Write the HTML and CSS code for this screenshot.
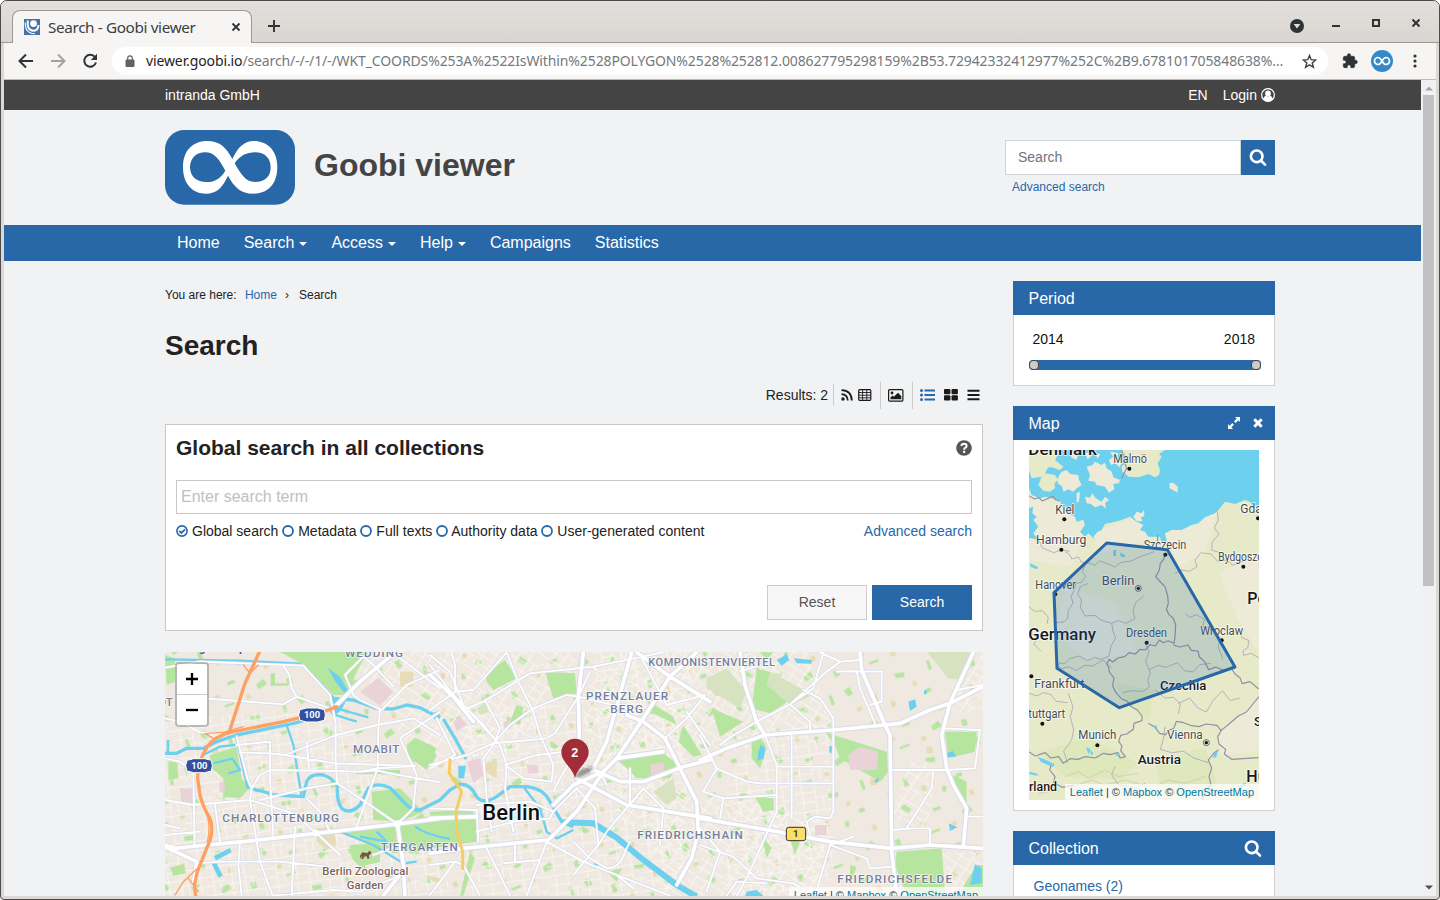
FILE: index.html
```html
<!DOCTYPE html>
<html lang="en">
<head>
<meta charset="utf-8">
<title>Search - Goobi viewer</title>
<link rel="stylesheet" href="styles.css">
</head>
<body>
<svg class="defs" width="0" height="0">
  <defs>
    <symbol id="i-search" viewBox="0 0 1792 1792"><path fill="currentColor" d="M1216 832q0-185-131.5-316.5t-316.5-131.5-316.5 131.5-131.5 316.5 131.5 316.5 316.5 131.5 316.5-131.5 131.5-316.5zm512 832q0 52-38 90t-90 38q-54 0-90-38l-343-342q-179 124-399 124-143 0-273.5-55.5t-225-150-150-225-55.5-273.5 55.5-273.5 150-225 225-150 273.5-55.5 273.5 55.5 225 150 150 225 55.5 273.5q0 220-124 399l343 343q37 37 37 90z"/></symbol>
    <symbol id="i-ring" viewBox="0 0 12 12"><circle cx="6" cy="6" r="5" fill="none" stroke="currentColor" stroke-width="1.8"/></symbol>
  </defs>
</svg>
<div class="window">
  <div class="tabstrip">
    <div class="tab">
      <svg class="favicon" width="16" height="16" viewBox="0 0 16 16"><rect width="16" height="16" fill="#4674a8"/><path d="M1.200 3.500Q1 14.800 11 14.800" fill="none" stroke="#fff" stroke-width="1.100"/><path d="M3.800 1.500Q2.500 11.500 9.500 11.800Q14.200 11.500 14.500 6" stroke="#fff" fill="none" stroke-width="2"/><circle cx="9.500" cy="4.600" r="3.400" fill="#fff"/></svg>
      <span class="tab-title">Search - Goobi viewer</span>
      <svg width="10" height="10" viewBox="0 0 10 10"><path d="M1.500 1.500l7 7m0-7l-7 7" stroke="#2e3436" stroke-width="1.800"/></svg>
    </div>
    <svg class="newtab" width="12" height="12" viewBox="0 0 12 12"><path d="M6 0v12M0 6h12" stroke="#2e3436" stroke-width="1.900"/></svg>
    <div class="wm">
      <svg width="14" height="14" viewBox="0 0 14 14"><circle cx="7" cy="7" r="7" fill="#2e3436"/><path d="M3.700 5h6.600L7 9.500z" fill="#e5e1dd"/></svg>
      <svg width="8" height="8" viewBox="0 0 8 8"><path d="M0 7h8" stroke="#2e3436" stroke-width="2"/></svg>
      <svg width="8" height="8" viewBox="0 0 8 8"><rect x="1" y="1" width="6" height="6" fill="none" stroke="#2e3436" stroke-width="2"/></svg>
      <svg width="8" height="8" viewBox="0 0 8 8"><path d="M.5.5l7 7m0-7l-7 7" stroke="#2e3436" stroke-width="2"/></svg>
    </div>
  </div>
  <div class="toolbar">
    <svg class="tb-i" width="16" height="16" viewBox="0 0 16 16"><path d="M15 8H2M8 1.500L1.500 8 8 14.500" fill="none" stroke="#2e3436" stroke-width="2"/></svg>
    <svg class="tb-i" width="16" height="16" viewBox="0 0 16 16"><path d="M1 8h13M8 1.500L14.500 8 8 14.500" fill="none" stroke="#a3a3a3" stroke-width="2"/></svg>
    <svg class="tb-i" width="16" height="16" viewBox="0 0 16 16"><path d="M13 4A6 6 0 1 0 14 9.500" fill="none" stroke="#2e3436" stroke-width="2"/><path d="M15 .8V7H8.800z" fill="#2e3436"/></svg>
    <div class="omnibox">
      <svg width="10" height="13" viewBox="0 0 10 13"><rect x="0.500" y="4.500" width="9" height="7.500" rx="1" fill="#5f6368"/><path d="M2.700 5V3.200a2.300 2.300 0 0 1 4.600 0V5" fill="none" stroke="#5f6368" stroke-width="1.200"/></svg>
      <div class="url"><b>viewer.goobi.io</b>/search/-/-/1/-/WKT_COORDS%253A%2522IsWithin%2528POLYGON%2528%252812.008627795298159%2B53.72942332412977%252C%2B9.678101705848638%…</div>
      <svg width="15" height="15" viewBox="0 0 15 15"><path d="M7.500 1.500l1.700 4.200 4.500.3-3.500 2.900 1.200 4.400-3.900-2.500-3.900 2.500 1.200-4.400L1.300 6l4.500-.3z" fill="none" stroke="#3c4043" stroke-width="1.400"/></svg>
    </div>
    <svg class="puzzle" width="16" height="16" viewBox="0 0 24 24"><path fill="#2e3436" d="M20.500 11H19V7c0-1.100-.9-2-2-2h-4V3.500a2.500 2.500 0 0 0-5 0V5H4c-1.100 0-2 .9-2 2v3.800h1.500a2.700 2.700 0 0 1 0 5.400H2V20c0 1.100.9 2 2 2h3.800v-1.500a2.700 2.700 0 0 1 5.400 0V22H17c1.100 0 2-.9 2-2v-4h1.500a2.500 2.500 0 0 0 0-5z" stroke="#2e3436"/></svg>
    <svg class="avatar" width="22" height="22" viewBox="0 0 22 22"><circle cx="11" cy="11" r="11" fill="#3589c9"/><path d="M11 11C9.500 8.300 8.600 7.500 7 7.500a3.500 3.500 0 0 0 0 7C8.600 14.500 9.500 13.700 11 11S13.400 7.500 15 7.500a3.500 3.500 0 0 1 0 7C13.400 14.500 12.500 13.700 11 11z" fill="none" stroke="#fff" stroke-width="1.700"/></svg>
    <svg class="dots" width="4" height="14" viewBox="0 0 4 14"><g fill="#2e3436"><circle cx="2" cy="2" r="1.600"/><circle cx="2" cy="7" r="1.600"/><circle cx="2" cy="12" r="1.600"/></g></svg>
  </div>
  <div class="viewport">
    <div class="page">
      <div class="topbar"><div class="wrap">
        <span class="brand">intranda GmbH</span><span>EN</span><span class="login">Login</span>
        <svg width="14" height="14" viewBox="0 0 14 14"><circle cx="7" cy="7" r="6.400" fill="none" stroke="#fff" stroke-width="1.200"/><circle cx="7" cy="5.500" r="2.900" fill="#fff"/><path d="M2.300 11.200C2.700 9 3.800 8 4.800 7.800q2.200 1.400 4.400 0c1 .2 2.100 1.200 2.500 3.400Q7 15.500 2.300 11.200z" fill="#fff"/></svg>
      </div></div>
      <div class="header wrap">
        <svg width="130" height="75" viewBox="45 60 390 225"><rect x="45" y="60" width="390" height="224" rx="58" fill="#2867a8"/><path fill="#fff" fill-rule="evenodd" d="M247 147C229 112 208 93 172 93C125 93 99 125 99 172C99 225 130 251 167 251C200 251 218 232 234 197C252 232 275 251 308 251C358 251 382 218 382 170C382 120 350 93 312 93C280 93 262 115 247 147ZM120 170C122 142 140 127 165 127C195 127 208 150 226 182C212 205 195 216 170 216C140 216 120 200 120 170ZM254 160C270 137 290 127 315 127C345 127 362 145 362 172C362 200 345 216 315 216C285 216 272 190 254 160Z"/></svg>
        <div class="site">Goobi viewer</div>
        <div class="quick">
          <div class="quick-row"><div class="quick-in">Search</div><div class="quick-btn"><svg width="18" height="18"><use href="#i-search"/></svg></div></div>
          <a class="adv">Advanced search</a>
        </div>
      </div>
      <div class="nav"><div class="wrap">
        <a>Home</a><a class="dd">Search</a><a class="dd">Access</a><a class="dd">Help</a><a>Campaigns</a><a>Statistics</a>
      </div></div>
      <div class="main wrap">
        <div class="content">
          <div class="crumbs">You are here: <a>Home</a><i>›</i><span>Search</span></div>
          <h1>Search</h1>
          <div class="tools">
            <span class="results">Results: 2</span>
            <span class="group g1">
              <svg width="12" height="12" viewBox="0 0 12 12"><circle cx="2" cy="10" r="1.700" fill="#1a1a1a"/><path d="M.5 5.200Q6.500 5.500 6.800 11.500M.5 1.200Q10.500 1.500 10.800 11.500" fill="none" stroke="#1a1a1a" stroke-width="1.800"/></svg>
              <svg width="14" height="12" viewBox="0 0 14 12"><rect x=".7" y=".7" width="12.100" height="10.600" rx="1" fill="none" stroke="#1a1a1a" stroke-width="1.200"/><path d="M1 3.500h12M1 6.200h12M1 8.800h12M4.600 1v10M8.800 1v10" stroke="#1a1a1a" stroke-width=".9"/></svg>
            </span>
            <span class="group g2"><svg width="16" height="13" viewBox="0 0 16 13"><rect x=".6" y=".6" width="14.300" height="11.500" rx="1" fill="none" stroke="#1a1a1a" stroke-width="1.200"/><circle cx="4" cy="4" r="1.400" fill="#1a1a1a"/><path d="M2.500 10.300V8.500l2-2 1.300 1.200L10 3.700l3.300 3.500v3.100z" fill="#1a1a1a"/></svg></span>
            <span class="group g3">
              <svg width="15" height="12" viewBox="0 0 15 12"><path d="M4.500 1.500H15M4.500 6H15M4.500 10.500H15" stroke="#2867a8" stroke-width="1.900"/><g fill="#2867a8"><circle cx="1.500" cy="1.600" r="1.500"/><circle cx="1.500" cy="6" r="1.500"/><circle cx="1.500" cy="10.400" r="1.500"/></g></svg>
              <svg width="14" height="12" viewBox="0 0 14 12"><g fill="#1a1a1a"><rect width="6.400" height="5.200" rx="1"/><rect x="7.500" width="6.400" height="5.200" rx="1"/><rect y="6.300" width="6.400" height="5.200" rx="1"/><rect x="7.500" y="6.300" width="6.400" height="5.200" rx="1"/></g></svg>
              <svg width="13" height="12" viewBox="0 0 13 12"><path d="M.5 1.800h12M.5 6h12M.5 10.200h12" stroke="#1a1a1a" stroke-width="2"/></svg>
            </span>
          </div>
          <div class="searchbox">
            <div class="sb-head"><h2>Global search in all collections</h2><svg width="16" height="16" viewBox="0 0 16 16"><circle cx="8" cy="8" r="7.800" fill="#555"/><path d="M5.300 6Q5.600 3.800 8 3.800 10.600 3.900 10.600 5.900 10.600 7.200 9.100 7.900 8.100 8.300 8.100 9.700" fill="none" stroke="#fff" stroke-width="2"/><rect x="7" y="10.800" width="2.200" height="2.100" fill="#fff"/></svg></div>
            <div class="term">Enter search term</div>
            <div class="opts">
              <svg width="12" height="12" viewBox="0 0 12 12"><circle cx="6" cy="6" r="5.100" fill="none" stroke="#2867a8" stroke-width="1.600"/><path d="M3.200 5.800l2.200 2.200 3.600-3.700" fill="none" stroke="#2867a8" stroke-width="1.800"/></svg><span class="o1">Global search</span>
              <svg width="12" height="12"><use href="#i-ring"/></svg><span class="o2">Metadata</span>
              <svg width="12" height="12"><use href="#i-ring"/></svg><span class="o3">Full texts</span>
              <svg width="12" height="12"><use href="#i-ring"/></svg><span class="o4">Authority data</span>
              <svg width="12" height="12"><use href="#i-ring"/></svg><span class="o5">User-generated content</span>
              <a>Advanced search</a>
            </div>
            <div class="btns"><span class="btn reset">Reset</span><span class="btn go">Search</span></div>
          </div>
          <div class="bigmap">
            <svg width="818" height="244" viewBox="15 21 2454 732">
              <defs>
                <pattern id="st1" width="96" height="84" patternUnits="userSpaceOnUse" patternTransform="rotate(-8)"><path d="M0 10H96M22 10V84M0 38H60M60 0V84M60 54H96M0 66H60M82 54V84" fill="none" stroke="#fbf8f4" stroke-width="2.600"/></pattern>
                <pattern id="st2" width="90" height="76" patternUnits="userSpaceOnUse" patternTransform="rotate(33)"><path d="M0 8H90M20 8V76M0 32H52M52 0V76M52 46H90M0 58H52M74 46V76" fill="none" stroke="#fbf8f4" stroke-width="2.600"/></pattern>
                <pattern id="bl" width="310" height="270" patternUnits="userSpaceOnUse" patternTransform="rotate(-20)">
                  <g fill="#b9e5a3"><path d="M20 20l20-4 4 22-16 4zM96 60h12v24H94zM180 24l30 6-4 14-26-6zM250 100h18v12h-18zM60 140l14-8 16 22-12 8zM150 174h24v10h-24zM230 210l26-8 6 18-30 6zM10 224h16v20H10zM120 236h30v8h-30zM282 20h10v30h-10zM200 120l12 4-6 16-10-4z"/></g>
                  <g fill="#e6dcb3"><path d="M140 100h14v18h-14zM36 84l18-4 2 12-16 4zM270 160h14v16h-14zM100 200h16v12h-16zM222 66h12v14h-12zM190 230h14v14h-14z"/></g>
                </pattern>
                <g id="roads" fill="none" stroke-linejoin="round" stroke-linecap="round">
                  <g>
                    <path d="M15 68L120 50L430 62L510 150L527 235V355L532 415M130 160L370 178L410 155L395 130L388 90L370 62M410 155L510 190M15 220L60 230L120 262L200 264M15 340L60 350L100 380L104 600M15 465L100 480L270 465L275 430L300 390L330 375L520 378L600 380L650 370L765 363M840 412L690 385L650 376L600 380M230 300L330 290V400L340 570M240 322L330 325L375 330L525 355L765 363M375 330L530 270L650 240L760 220L840 270M230 275L262 400L275 430M270 465L290 590L300 650L338 752M270 465L400 505L470 565L540 630M440 290L447 370M660 190L655 250L653 370L590 545M555 90L580 150L600 165L665 195L740 120L840 75M555 90L610 35L640 60L700 125M700 25L840 130M300 465L440 430L532 415L630 480L712 537M712 537L760 490L770 390L720 280L840 200M240 590L235 660L245 752M110 655L180 650L360 650L500 665M405 545L395 752M15 570L120 560M15 540L60 550M165 480L180 590M340 752L520 735L600 740L700 700L740 670M640 630L720 600M440 460L480 500L510 560"/>
                    <path class="wide" d="M530 180L600 110L705 22M15 600L45 610L110 603L250 590L470 565L712 537L840 520M15 605L110 650L100 720M712 537L730 660L735 752M735 670L670 752"/>
                  </g>
                  <g transform="translate(810)">
                    <path d="M0 30L60 80L100 180L210 300L230 360L225 430L250 560M65 22L75 60V140L0 195M75 140L130 135L230 22M110 190L160 170L300 85L490 65L500 75M490 65L700 22M230 22L260 100L310 200L330 270L370 360L365 410L280 400L225 360M0 360L110 330L190 295L350 280L375 265L445 155L480 80M165 165L210 250L190 300L160 340L170 460M190 295L240 240L310 190L410 150L445 155M225 360L320 330L410 320L420 350L390 400L370 440M140 480L300 470L370 500M0 60L70 150L160 240L210 300M445 155L630 200M0 490L140 495M140 495L145 590M20 220L75 330L0 370M0 750L75 650L100 660L150 752M0 660L75 650M170 610L240 752M255 600V650M140 560L250 530L360 520L370 500L440 430M440 430L495 490L505 600L530 560L640 430L600 480L600 370M505 600L430 690M350 590L460 650L560 690L720 752M560 690L610 730M330 645L290 752M220 655L330 645L350 590M640 430L700 490L690 600M630 30L710 180L825 150L770 220L705 280M770 200L840 300M430 590L480 640L530 670Q570 670 585 620L600 590M170 460L185 560M530 420L510 380L450 360"/>
                    <path class="wide" d="M0 90L70 155L130 230M460 22L445 155L450 370M605 22L575 130L530 290L485 380M520 380L440 500L355 585L100 610L0 625M0 520L140 515M370 480L430 420L520 380L560 340L640 220L720 95L800 22M440 400L590 480L840 520M620 22L720 95L840 170M590 210L640 230L705 280L750 370L800 470L805 560L785 640L740 720M480 370L570 410H640L760 365L840 345M560 340L700 320"/>
                  </g>
                  <g transform="translate(1620)">
                    <path d="M270 178L380 80L420 50L360 22M420 50L480 45M170 230L270 178L340 130L370 22M270 178L330 230V260M310 135L360 160L400 220V500L390 520L345 515L320 530L330 570M275 270V520M230 365H400M180 415H400M0 270L50 370L10 440L70 460L230 450M70 460L60 520M50 370L140 410L180 415M510 180L545 170V80H410L470 78L480 130L525 235M195 270L230 360V500L205 555L140 700L110 752M0 600L100 635L170 700L280 715L345 752M0 550L60 620L20 740M80 752L110 710L200 715M390 600L500 640L510 670L580 665M390 600L345 752M390 600L460 575M575 555L640 550H690V600M580 375H700L740 375L825 370L840 255L730 250M700 375L695 430L620 550M770 135L849 120M800 515H849M60 300L85 280L170 230M120 80L180 60"/>
                    <path class="wide" d="M0 345L80 310L195 270L400 255L555 240L600 235L690 195L750 175L820 22M750 175L849 125M120 22L135 120L170 230L195 270M480 22L485 75L555 240L570 270L575 620L590 752M0 520L205 555L390 590L575 610L690 600L849 610M750 175L725 270L740 370L760 420L800 490L790 605"/>
                  </g>
                </g>
              </defs>
              <rect x="0" y="0" width="2500" height="800" fill="#efe9e1"/>
              <rect x="0" y="0" width="2500" height="800" fill="url(#bl)"/>
              <path fill="url(#st1)" d="M0 230L520 180L800 560L900 800H0zM900 180L1280 180L1340 480L1450 800H900zM1820 250L2000 240L2030 700L1700 800V400zM1300 20H1600L1560 800H1340z"/>
              <path fill="url(#st2)" d="M500 20H1280L1100 300L800 400L620 100zM1250 180L1350 20H1940L2020 250L1620 340L1400 560zM1420 400L2000 520L1980 760H1500zM2250 350H2340L2300 550H2180zM2360 200H2469V20zM2200 620H2469V753H2260z"/>
              <g fill="#b6e5a0">
                <path d="M355 18H625L590 80L560 150L520 150L430 58zM740 300L765 278L830 310L800 375L745 335zM150 330L230 305L245 400L268 430L240 460L190 455V400L155 370zM25 350H52L55 400L25 405zM15 30L45 40V110L20 120zM30 668L70 658L78 685L40 692zM570 600L660 595V650L600 665L575 640zM548 562L712 540L950 510V590L700 625L640 600zM635 440L720 430L790 500L720 530L640 525zM590 375H720V388H590zM332 85H345V115H384V122H332z"/>
                <path transform="translate(810)" d="M168 85L225 45L260 100L190 135L170 110zM345 80L435 85L440 145L370 160zM565 345L690 315L745 360L720 400H620zM0 500L130 495L138 590L60 590L0 560zM0 310L20 330L0 370zM760 240L815 330L790 335L745 290zM650 165L730 215L740 240L670 205zM530 680L575 670L560 710zM120 620L135 640L100 752H90zM260 180L280 185L270 240L240 230z"/>
                <path transform="translate(1620)" d="M170 70L210 80L270 165L210 205L155 190zM35 190L130 230L60 275zM155 280L180 270L200 310L180 370L155 340zM165 455L220 460L222 495L190 500zM375 262L560 320L565 380L540 410L420 340L405 300zM590 620L725 610L735 740L620 752L585 660zM735 260L830 260L825 320L745 340zM760 390L800 410V490L775 450zM780 740L830 660H849V752zM185 570L215 610L200 640zM270 580L300 590L285 630zM450 660L470 665L450 720zM180 22H220L200 45z"/>
              </g>
              <g fill="#d7e2c1"><path d="M2300 20H2435L2400 105L2365 100zM1640 100L1700 70L1760 140L1740 190L1640 130zM1830 80L1960 150L1890 180L1820 120zM1480 440L1540 400L1550 460L1520 480zM70 360L85 370L80 400zM950 190l30-20 5 30-25 10z"/></g>
              <g fill="#ead2d9"><path d="M600 140L655 98L700 140L660 182zM60 430H98V475L65 472zM178 410H194V442H178zM880 230L900 212L920 240L890 258zM920 350L960 340L970 390L940 415zM1470 360L1510 350L1515 390L1475 405zM2065 330L2100 305L2155 320L2150 375L2070 375zM1100 360H1135V385H1105zM1030 230l20-5 5 20-20 12zM1965 540H2000V570H1965z"/></g>
              <g fill="#e6dcb5"><path d="M470 550L520 545L530 600L500 615L470 590zM720 80H760V125H720zM980 350H1010V400L975 380zM790 690L840 700V720zM700 570L740 600L720 610zM2300 305H2318V325H2300zM2130 400H2152V420H2130z"/></g>
              <g fill="none" stroke="#6ed0ef" stroke-linejoin="round">
                <path d="M15 43L240 47L420 56L440 70L520 158M228 275L262 425M380 240L400 300L425 455M545 562L640 600L730 655L770 650M130 330L180 305L225 300M530 190L625 217M520 208L590 230M765 545Q800 570 870 582M160 355L220 340M205 385L240 375L220 345M600 575L680 590L650 560" stroke-width="7"/>
                <path d="M15 325L50 325L80 310L130 310L170 290L230 270L400 235L440 225M515 160L580 165L650 190L700 192L740 180L780 188L840 218M262 425Q280 435 300 437L345 450L430 455L440 410Q450 385 490 390Q520 400 532 425Q530 470 545 490Q570 510 600 480L625 430Q650 410 690 428L730 470Q750 495 780 495L840 465L870 435L900 418Q930 415 950 455Q970 480 1010 455L1050 425H1100Q1150 430 1170 470L1205 530L1240 545M850 222L885 280L918 342" stroke-width="10"/>
                <path d="M1090 425L1140 490L1160 560L1190 580L1240 555" stroke-width="7"/>
                <path d="M165 640L212 615M162 655L182 695" stroke-width="14"/><path d="M24 285V325" stroke-width="8"/>
              </g>
              <g fill="#6ed0ef"><path d="M503 68L540 95L570 148L550 140L525 108zM512 160L562 158L545 195L520 215L510 200zM812 208L830 200L842 212L825 224zM895 362H918L912 400H895zM1850 45L1880 28L1888 45L1865 62zM1902 40L1955 45V56L1910 55zM2245 170L2265 163L2270 185L2250 198zM2292 136h8v12h-8zM1795 320L1803 298L1815 310L1812 340L1792 347zM2008 303h9v20h-9zM2358 325L2380 318L2388 335L2362 336zM2366 535L2392 547L2370 558zM2430 720L2445 658L2465 670V715zM1760 740L1790 735L1810 753H1755zM2145 405L2155 397V412H2143zM1302 655h12v15h-12z"/></g>
              <use class="casing" href="#roads" stroke="#d9dbe8" stroke-width="9.500"/>
              <path d="M1205 532L1300 535L1370 578L1450 645L1550 720L1610 755" fill="none" stroke="#6ed0ef" stroke-width="18"/>
              <use class="inner" href="#roads" stroke="#fff" stroke-width="5.500"/>
              <g fill="none" stroke="#fff" stroke-width="10"><circle cx="712" cy="537" r="6"/><circle cx="467" cy="565" r="5"/><circle cx="37" cy="611" r="5"/></g>
              <g fill="none" stroke="#ff9f61" stroke-linecap="round" stroke-linejoin="round">
                <path d="M298 21L255 115L208 260M530 185L490 201L370 230L210 262Q160 275 140 308Q113 350 113 400L120 450Q130 490 150 520Q165 560 140 610L112 680L103 720L107 753" stroke-width="10"/>
                <path d="M135 490Q155 540 142 590M112 670L70 710L45 750M160 280L135 265M250 60L270 85L295 60M85 700L115 740M140 265L190 262L250 245" stroke-width="4"/>
              </g>
              <path d="M870 340L868 385L905 440L888 500L890 560L908 620L908 675" fill="none" stroke="#f6cc66" stroke-width="9" stroke-linejoin="round"/>
              <g class="district">
                <text x="555" y="36" textLength="174">WEDDING</text><text x="579" y="325" textLength="139">MOABIT</text><text x="187" y="532" textLength="350">CHARLOTTENBURG</text><text x="662" y="617" textLength="231">TIERGARTEN</text><text class="sm" x="1465" y="62" textLength="380">KOMPONISTENVIERTEL</text><text x="1278" y="165" textLength="246">PRENZLAUER</text><text x="1351" y="204" textLength="98">BERG</text><text x="1432" y="582" textLength="316">FRIEDRICHSHAIN</text><text x="2032" y="715" textLength="344">FRIEDRICHSFELDE</text><text x="-6" y="184">OT</text>
              </g>
              <g class="poi"><text x="487" y="690" textLength="258">Berlin Zoological</text><text x="560" y="732" textLength="111">Garden</text></g>
              <path d="M600 632L607 622L622 624L628 617L634 622L632 628L627 631L628 641H622L620 634L612 635L610 642H604L606 632L600 641z" fill="#795548"/>
              <text class="berlin" x="967" y="524" textLength="173">Berlin</text>
              <text class="cutname" x="72" y="22" textLength="220">Jungfernheidepark</text>
              <g class="shield"><path d="M420 194L440 189H473L493 194L496 210L493 226L473 231H440L420 226L416 210z"/><text x="456" y="220">100</text><path d="M81 346L101 341H134L154 346L157 362L154 378L134 383H101L81 378L77 362z"/><text x="118" y="372">100</text></g>
              <rect x="1879" y="547" width="58" height="40" rx="7" fill="#fbdd69" stroke="#33322c" stroke-width="3"/><text class="b1" x="1907" y="577">1</text>
              <path class="shadow" d="M1245 395Q1260 365 1302 365Q1294 388 1245 399z"/>
              <path d="M1245 398C1235 365 1204 350 1204 322A41 41 0 0 1 1286 322C1286 350 1255 365 1245 398z" fill="#a22c37"/><text class="pin" x="1244" y="337">2</text>
            </svg>
            <div class="zoom"><span><svg width="12" height="12" viewBox="0 0 12 12"><path d="M6 0v12M0 6h12" stroke="#000" stroke-width="2.300"/></svg></span><span><svg width="12" height="12" viewBox="0 0 12 12"><path d="M0 6h12" stroke="#000" stroke-width="2.300"/></svg></span></div>
            <div class="attr a1"><a>Leaflet</a> | © <a>Mapbox</a> © <a>OpenStreetMap</a></div>
          </div>
        </div>
        <div class="side">
          <div class="widget"><div class="w-head"><span>Period</span></div><div class="w-body period"><div class="years"><span>2014</span><span>2018</span></div><div class="slider"><i></i><i></i></div></div></div>
          <div class="widget"><div class="w-head"><span>Map</span><svg class="expand" width="12" height="12" viewBox="0 0 12 12"><path d="M7 0h5v5l-1.700-1.700L7.700 6 6 4.300 8.700 1.700zM5 12H0V7l1.700 1.700L4.300 6 6 7.700 3.300 10.300z" fill="#fff"/></svg><svg class="close" width="10" height="10" viewBox="0 0 10 10"><path d="M1.300 1.300l7.400 7.400m0-7.400L1.300 8.700" stroke="#fff" stroke-width="3"/></svg></div>
            <div class="w-body mapbody"><div class="smallmap">
              <svg width="230" height="350" viewBox="72 390 690 1050">
                <rect x="72" y="390" width="690" height="1050" fill="#e7eac9"/>
                <g fill="#edebd8"><path d="M72 520L250 600L200 740L72 720zM180 800L330 850L400 1000L240 1020L150 940zM480 640L640 570L600 700L520 740zM640 760L762 700V1000L700 900zM250 640L400 590L450 650L300 700zM640 1240L762 1130V1290L650 1310z"/></g>
                <g fill="#dde6ba" opacity=".8"><path d="M100 1300L250 1250L400 1330L350 1380L180 1370zM330 1090L450 1110L430 1200L360 1150zM450 1330L600 1280L640 1400L480 1440z"/></g>
                <g fill="none" stroke="#cfcd9c" stroke-width="4" opacity=".6"><path d="M180 1370l40-15 30 20 50-25 40 20 60-10M200 1400l60-20 40 15 60-15 70 20M450 1400l40-20 50 10 60-20M100 1420l60-10"/></g>
                <path fill="#6ed0ef" d="M140 390H350L360 405L372 410L365 425L350 440L352 455L372 470L400 472L430 462L450 472L462 465L465 450L458 430L470 410L462 402L480 390H762V555L745 558L735 545L720 540L690 552L660 545L640 570L630 580L600 592L580 610L560 615L530 630L500 630L480 640L485 665L470 670L465 650L430 650L420 635L405 630L415 615L395 605L375 590L350 600L330 605L300 612L290 630L278 635L265 650L270 660L250 640L240 650L225 635L240 615L235 600L215 605L210 590L190 580L185 562L170 560L165 540L140 535L120 530L105 535L80 525L72 505V450L80 475L110 470L100 495L115 512L135 515L150 505L148 490L160 480L150 465L120 460L128 445L135 440L165 450L175 440L150 420L158 405L170 400z"/>
                <path fill="#6ed0ef" d="M72 565L85 560L82 580L95 590L85 600L100 620L85 640L98 655H72z"/>
                <g fill="#edebd8"><path d="M160 470L170 455L185 450L195 462L220 465L222 480L230 495L215 505L205 515L190 508L175 515L172 500L158 490zM245 440L262 436L270 425L290 435L300 428L305 445L320 455L325 472L345 480L342 490L325 492L328 508L312 518L300 500L275 495L270 485L250 482L255 465zM240 530L255 533L262 520L272 535L290 545L300 530L312 540L300 550L304 566L290 555L270 562L258 552L245 550zM315 395L340 400L335 415L348 430L345 442L330 430L318 435L312 420L325 410zM493 490L505 488L518 500V518L508 512L494 505zM385 590L395 575L410 580L417 570L418 588L408 592L412 604L395 604zM215 520L225 515L222 545L215 548zM200 395L220 398L215 420L198 412zM240 400l14-4 4 14-10 8zM270 400l16 2-8 14z"/></g>
                <g fill="none" stroke="#a9a6bb" stroke-width="2.500" stroke-linejoin="round"><path d="M180 695l14 8 6 14 20-6 10 16 25 2 15 8M240 735l-8 20 10 14-12 18-18 4-6 24-8 14 6 20-14 22-2 24-10 10-28 4M270 735l14-12 22 8 24 10 18-14 30-4 30-14 40-14M250 790l-24 10-8 22 12 18-4 22 14 26 30-2 18 14 32 10 20-8 22 8 28-14-6-24 8-24 24-20M320 910l4 24 8 20-14 24-6 30-24 10-20-6-20 10-26-14-28 8-16 16-14-4-8 12M636 570l4 30-12 24 14 18-20 24-2 24 26 8M510 760l20-10 24 4 22-14-6-20 18-22 30 4 20 22 28-4 18 16 34-14M540 880l14 12 20-8 24 14-4 20 24 10 26 30-4 24 14 36M690 930l16 4 4 18 22 10-4 22-14 8 2 14 22-6 24 14M150 1030l20 16 22-6 20 12 28-16 24 2 30-18 26 24M420 970l12 24-10 30 14 34-8 24 6 18-20 14-34-2-28 6M430 1050l30-14 22 6 36-14 20 24 26 4 20-22 34-4M450 1110l30 24 26-2 20 20-6 30M520 1150l34-16 24 30 26 12 20-34 28-30 24 30 28-8M190 1120l14 40-8 30 10 40-6 30-24 34 12 34M72 1120l24 8 20-10 22 6 16 20 34 4M480 1220l-4 34-10 34 34 10 36-4 30 20 44 14M72 860l16 14 24-2 18 20-4 20M72 650l30 10 10 24 34 14 24-8 24 4M72 940l22 8-6 26 20 20M330 1340l-10 24 20 30 50 10 30-14"/></g>
                <g fill="none" stroke="#918fa5" stroke-width="3.500" stroke-linejoin="round"><path d="M72 527l16 10 14-4 10 10 18-8 14-6 8 10 13 4M350 475l15-30-10-30-5-25M458 645v20M480 700l-4 18-10 12-3 20-11 20 14 16 14 14 8 28 2 22-6 18 8 16 12 10 8 20-2 36-3 20-18-8-14 6-12-8-12 18-16-4-14 16-16-2-14 14-18-4-14 12-20 4-16 12-10-8-8 14 6 10 2 14 14 18-4 24 10 20 16 18 18 8 12 16 18 10 14 18v14l-24 8-2 18-20 14-18 4-6 18 10 14-4 14 14 18-16 4-6-16-24 6-20-4-24 14-30-4-22 8-24-2-20 14-14-20-24 4-16-16-30 10-28-18M505 975l20 6 24-6 10 16 20 2 4 18 16 14 12 24 22-8 22 10 24-6 12 18 14 10 6 18 24-6 26 22M430 1210l20 12 14 18 18 4 10-14 14-4 8-22 22 4 20 8 26 4 22-8 32 4 12 16 24-20 28-24 24-12 38-46M650 1230l-12 20 4 22 20 16-4 14 22 16 80-5M640 1290l-14 10-16 20 10 24-8 26 6 24-18 20-8 26M140 1330l-6 20 16 20-4 18 26 14 34-6"/></g>
                <g fill="#6ed0ef"><path d="M243 1282l14 6-6 16zM255 1290l10 8-6 10zM330 1305l14-5-4 10zM72 1355l26 6v6l-24-4zM98 1310l20 8 30 14-4 10-36-16zM628 1300l10-6-4 18-10 2zM444 1214l12 4v8l-10-4zM325 690h8v18h-8zM345 697l14 8v8l-12-4zM76 730l24 12-4 6-20-8zM700 1400l24-14-4 10-14 10z"/></g>
                <g class="city"><text x="325" y="430" textLength="101" lengthAdjust="spacingAndGlyphs">Malmö</text><text x="151" y="583" textLength="57" lengthAdjust="spacingAndGlyphs">Kiel</text><text x="93" y="672" textLength="151" lengthAdjust="spacingAndGlyphs">Hamburg</text><text x="706" y="579">Gdańsk</text><text x="416" y="686" textLength="128" lengthAdjust="spacingAndGlyphs">Szczecin</text><text x="640" y="722" textLength="148" lengthAdjust="spacingAndGlyphs">Bydgoszcz</text><text x="290" y="794" textLength="98" lengthAdjust="spacingAndGlyphs">Berlin</text><text x="91" y="806" textLength="122" lengthAdjust="spacingAndGlyphs">Hanover</text><text x="363" y="952" textLength="123" lengthAdjust="spacingAndGlyphs">Dresden</text><text x="586" y="946" textLength="128" lengthAdjust="spacingAndGlyphs">Wroclaw</text><text x="88" y="1104" textLength="151" lengthAdjust="spacingAndGlyphs">Frankfurt</text><text x="70" y="1193" textLength="110" lengthAdjust="spacingAndGlyphs">tuttgart</text><text x="220" y="1257" textLength="114" lengthAdjust="spacingAndGlyphs">Munich</text><text x="486" y="1256" textLength="107" lengthAdjust="spacingAndGlyphs">Vienna</text></g>
                <g class="country"><text class="lg" x="70" y="406" textLength="206" lengthAdjust="spacingAndGlyphs">Denmark</text><text class="lg" x="70" y="961" textLength="203" lengthAdjust="spacingAndGlyphs">Germany</text><text x="465" y="1111" textLength="139" lengthAdjust="spacingAndGlyphs">Czechia</text><text x="398" y="1332" textLength="130" lengthAdjust="spacingAndGlyphs">Austria</text><text x="72" y="1412" textLength="84" lengthAdjust="spacingAndGlyphs">rland</text><text class="lg" x="727" y="853">Poland</text><text class="lg" x="724" y="1386">Hungary</text><text x="747" y="1219">Slovakia</text></g>
                <g fill="#111"><circle cx="373" cy="446" r="6"/><circle cx="178" cy="598" r="6"/><circle cx="169" cy="689" r="6"/><circle cx="759" cy="595" r="6"/><circle cx="481" cy="704" r="6"/><circle cx="715" cy="740" r="6"/><circle cx="400" cy="805" r="5"/><circle cx="151" cy="823" r="6"/><circle cx="425" cy="968" r="6"/><circle cx="650" cy="961" r="6"/><circle cx="79" cy="1069" r="6"/><circle cx="112" cy="1211" r="6"/><circle cx="277" cy="1276" r="6"/><circle cx="604" cy="1268" r="5"/></g>
                <g fill="none" stroke="#333" stroke-width="2"><circle cx="400" cy="805" r="9"/><circle cx="604" cy="1268" r="9"/></g>
                <path d="M305 669L487 689L690 1041L343 1163L156 1045L147 818z" fill="#2867a8" fill-opacity=".2" stroke="#2867a8" stroke-width="9" stroke-linejoin="round"/>
              </svg>
              <div class="attr"><a>Leaflet</a> | © <a>Mapbox</a> © <a>OpenStreetMap</a></div>
            </div></div></div>
          <div class="widget"><div class="w-head"><span>Collection</span><svg width="18" height="18"><use href="#i-search"/></svg></div><div class="w-body coll"><a>Geonames (2)</a></div></div>
        </div>
      </div>
    </div>
    <div class="scrollbar"><svg width="8" height="5" viewBox="0 0 8 5"><path d="M0 4.500L4 .5l4 4z" fill="#a3a3a3"/></svg><div class="thumb"></div><svg class="down" width="8" height="5" viewBox="0 0 8 5"><path d="M0 .5h8L4 4.500z" fill="#505050"/></svg></div>
  </div>
</div>
</body>
</html>
```
FILE: styles.css
```css
* { box-sizing: border-box; }
body { margin: 0; background: #fff; font: 14px/20px "Liberation Sans", Arial, sans-serif; color: #222; overflow: hidden; }
svg { display: block; flex: none; }
.defs { position: absolute; }
a { color: #2867a8; }
.window { width: 1440px; height: 900px; border: 1px solid #4e4b4c; border-radius: 7px 7px 4px 4px; background: #dcd8d3; padding: 0 3px 3px; display: flex; flex-direction: column; overflow: hidden; }
.tabstrip { height: 42px; flex: none; margin: 0 -3px; padding-left: 11px; display: flex; align-items: flex-end; background: linear-gradient(#e3dfdc, #d9d5d0); border-bottom: 1px solid #9d9996; }
.tab { width: 240px; height: 33px; margin-bottom: -1px; border: 1px solid #9d9996; border-bottom: 0; border-radius: 8px 8px 0 0; background: #f6f5f4; display: flex; align-items: center; padding: 0 10px 1px 11px; }
.tab-title { font: 15.300px/20px "Noto Sans", sans-serif; letter-spacing: -.37px; color: #3b4042; margin-left: 8px; flex: 1; white-space: nowrap; }
.newtab { margin: 0 0 10px 16px; }
.wm { display: flex; margin: 0 19px 9px auto; align-items: center; gap: 32px; }
.wm svg:first-child { margin: 6px -4px 0 0; }
.toolbar { height: 37px; flex: none; background: #f6f5f4; border-bottom: 1px solid #bdbab7; display: flex; align-items: center; padding-left: 14px; }
.tb-i { margin-right: 16px; }
.omnibox { margin-left: -2px; width: 1216px; height: 28px; border-radius: 14px; background: #fff; display: flex; align-items: center; padding: 0 11px 0 13px; }
.url { font: 14px/20px "Noto Sans", sans-serif; letter-spacing: -.118px; color: #75797c; margin-left: 11px; width: 1142px; flex: none; white-space: nowrap; margin-right: 14px; }
.url b { color: #1c1e20; font-weight: 400; }
.puzzle { margin-left: 14px; }
.avatar { margin-left: 13px; }
.dots { margin-left: 20px; }
.viewport { flex: 1; min-height: 0; display: flex; background: #f1f1f1; }
.page { width: 1417px; overflow: hidden; background: #f1f2f4; }
.wrap { width: 1110px; margin-left: 161px; display: flex; }
.topbar { background: #444; color: #fff; height: 30px; }
.topbar .wrap { align-items: center; height: 30px; }
.brand { flex: 1; }
.login { margin: 0 4px 0 15px; }
.header { height: 115px; padding-top: 20px; align-items: flex-start; }
.site { font-size: 32px; line-height: 36px; font-weight: 700; color: #444; margin: 17px 0 0 19px; flex: 1; }
.quick { width: 270px; margin-top: 10px; }
.quick-row { display: flex; height: 35px; }
.quick-in { flex: 1; border: 1px solid #ced4da; background: #fff; color: #6c757d; padding: 6px 12px; }
.quick-btn { width: 34px; background: #2867a8; color: #fff; display: flex; align-items: center; justify-content: center; padding: 0 1px 2px 0; }
.adv { display: block; font-size: 12px; line-height: 16px; margin: 4px 0 0 7px; }
.nav { background: #2867a8; height: 36px; }
.nav .wrap { height: 36px; align-items: center; padding-left: 12px; gap: 24px; }
.nav a { color: #fff; font-size: 16px; display: flex; align-items: center; }
.dd::after { content: ""; border: 4px solid transparent; border-top-color: #fff; border-bottom: 0; margin: 1px 0 0 5px; }
.main { padding-top: 20px; justify-content: space-between; }
.content { width: 818px; }
.crumbs { font-size: 12px; line-height: 16px; margin-top: 6px; }
.crumbs a { margin-left: 5px; }
.crumbs i { font-style: normal; margin: 0 10px 0 8px; }
h1 { font-size: 28px; line-height: 34px; margin: 26px 0 18px; }
.tools { display: flex; align-items: center; justify-content: flex-end; height: 28px; padding-right: 3px; }
.group { display: flex; align-items: center; border-left: 1px solid #ccc; }
.g1 { height: 22px; margin-left: 5px; padding: 0 8px 0 7px; gap: 5px; }
.g2 { height: 27px; padding: 0 8px 0 7px; }
.g3 { height: 27px; padding-left: 7px; gap: 9px; }
.searchbox { margin-top: 15px; height: 207px; border: 1px solid #c8c8c8; background: #fff; padding: 10px; display: flex; flex-direction: column; }
.sb-head { display: flex; align-items: center; justify-content: space-between; height: 26px; }
h2 { font-size: 21px; line-height: 26px; margin: 0; }
.term { margin-top: 19px; height: 34px; border: 1px solid #c8c8c8; padding: 6px 4px; font-size: 16px; color: #c0c0c0; flex: none; }
.opts { display: flex; align-items: center; margin-top: 7px; height: 20px; white-space: nowrap; }
.opts svg { color: #2867a8; }
.opts span { margin: 0 3.800px 0 4px; }
.opts .o4 { margin-left: 3px; }
.opts a { margin-left: auto; }
.btns { display: flex; justify-content: flex-end; gap: 5px; margin-top: 44px; }
.btn { width: 100px; height: 35px; line-height: 33px; text-align: center; border: 1px solid #ccc; background: #f7f7f7; color: #555; }
.go { background: #2867a8; border-color: #2867a8; color: #fff; }
.bigmap { margin-top: 21px; height: 244px; position: relative; }
.wide { stroke-width: var(--wide); }
.casing { --wide: 17px; }
.inner { --wide: 11px; }
.shadow { fill: #222; opacity: .45; filter: blur(4px); }
.district { font: 500 35px Roboto, sans-serif; fill: #757e9c; stroke: #fff; stroke-opacity: .75; stroke-width: 5px; paint-order: stroke; }
.district .sm { font-size: 33px; }
.poi { font: 500 34px Roboto, sans-serif; fill: #7d6259; stroke: #fff; stroke-width: 5px; paint-order: stroke; }
.berlin { font: 500 66px Roboto, sans-serif; fill: #111; stroke: #fff; stroke-width: 6px; paint-order: stroke; }
.cutname { font: 700 34px Roboto, sans-serif; fill: #3e5cab; }
.shield path { fill: #334f9f; stroke: #fff; stroke-width: 3px; }
.shield text { fill: #fff; font: 700 28px Roboto, sans-serif; text-anchor: middle; }
.b1 { font: 700 29px Roboto, sans-serif; fill: #4c421c; text-anchor: middle; }
.pin { font: 700 38px "Liberation Sans", sans-serif; fill: #fff; text-anchor: middle; }
.zoom { position: absolute; left: 10px; top: 10px; width: 34px; border: 2px solid rgba(0,0,0,.22); border-radius: 4px; background: #fff; background-clip: padding-box; }
.zoom span { height: 30px; display: flex; align-items: center; justify-content: center; }
.zoom span:first-child { border-bottom: 1px solid #ccc; height: 31px; }
.attr { position: absolute; right: 0; bottom: 0; background: rgba(255,255,255,.7); padding: 0 5px; font-size: 11px; line-height: 16px; color: #333; white-space: nowrap; }
.attr a { color: #0078a8; }
.a1 { bottom: -7px; }
.side { width: 262px; }
.widget { margin-bottom: 20px; }
.w-head { height: 34px; background: #2867a8; color: #fff; font-size: 16px; display: flex; align-items: center; padding: 0 13px 0 15.500px; }
.w-head span { flex: 1; padding-top: 2px; }
.expand { margin-right: 13px; }
.close { margin-right: -1px; }
.w-body { background: #fff; border: 1px solid #d0d0d0; border-top: 0; }
.period { height: 71px; padding: 14px 13px 0 15px; color: #111; }
.years { display: flex; justify-content: space-between; padding: 0 6px 0 3.500px; }
.slider { height: 10px; margin-top: 11px; background: #2867a8; border-radius: 4px; display: flex; justify-content: space-between; }
.slider i { width: 10px; height: 10px; border: 1px solid #444; border-radius: 4px; background: #ccc; }
.mapbody { height: 371px; padding: 10px 15px; }
.smallmap { position: relative; width: 230px; height: 350px; }
.city { font: 400 36px Roboto, sans-serif; fill: #474950; stroke: #fff; stroke-opacity: .75; stroke-width: 5px; paint-order: stroke; }
.country { font: 500 39px Roboto, sans-serif; fill: #17181c; stroke: #fff; stroke-opacity: .75; stroke-width: 5px; paint-order: stroke; }
.country .lg { font-size: 48px; }
.coll { height: 60px; padding: 11px 19.500px; }
.scrollbar { width: 15px; background: #f1f1f1; display: flex; flex-direction: column; align-items: center; padding-top: 6px; }
.thumb { width: 11px; height: 491px; background: #c1c1c1; margin-top: 4px; }
.down { margin: auto 0 6px; }
```
